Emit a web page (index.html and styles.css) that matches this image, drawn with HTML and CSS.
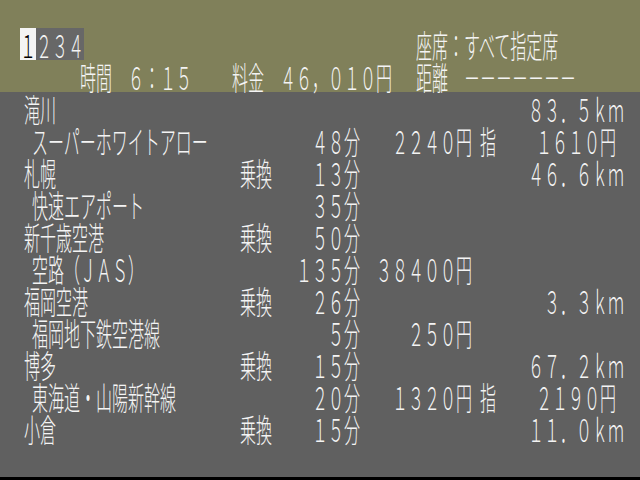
FILE: index.html
```html
<!DOCTYPE html>
<html>
<head>
    <title>経路検索</title>
    <link rel="stylesheet" href="styles.css">
</head>
<body>
    <div class="screen">
        <div class="header">
            <div class="head-row">
                <div class="tabs">
                    <span class="tab active">１</span><span class="tab">２</span><span class="tab">３</span><span class="tab">４</span>
                </div>
                <span class="seat-info">座席：すべて指定席</span>
            </div>
            <div class="head-row summary">
                <span class="sum-time">時間　６：１５</span>
                <span class="sum-fare">料金　４６，０１０円</span>
                <span class="sum-dist">距離　－－－－－－－</span>
            </div>
        </div>

        <div class="route">
            <div class="row station"><span class="name">滝川</span><span></span><span></span><span></span><span></span><span class="dist">８３．５ｋｍ</span></div>
            <div class="row line"><span class="name">スーパーホワイトアロー</span><span></span><span class="time">４８分</span><span class="fare">２２４０円</span><span class="mark">指</span><span class="extra">１６１０円</span></div>
            <div class="row station"><span class="name">札幌</span><span class="xfer">乗換</span><span class="time">１３分</span><span></span><span></span><span class="dist">４６．６ｋｍ</span></div>
            <div class="row line"><span class="name">快速エアポート</span><span></span><span class="time">３５分</span></div>
            <div class="row station"><span class="name">新千歳空港</span><span class="xfer">乗換</span><span class="time">５０分</span></div>
            <div class="row line"><span class="name">空路（ＪＡＳ）</span><span></span><span class="time">１３５分</span><span class="fare">３８４００円</span></div>
            <div class="row station"><span class="name">福岡空港</span><span class="xfer">乗換</span><span class="time">２６分</span><span></span><span></span><span class="dist">３．３ｋｍ</span></div>
            <div class="row line"><span class="name">福岡地下鉄空港線</span><span></span><span class="time">５分</span><span class="fare">２５０円</span></div>
            <div class="row station"><span class="name">博多</span><span class="xfer">乗換</span><span class="time">１５分</span><span></span><span></span><span class="dist">６７．２ｋｍ</span></div>
            <div class="row line"><span class="name">東海道・山陽新幹線</span><span></span><span class="time">２０分</span><span class="fare">１３２０円</span><span class="mark">指</span><span class="extra">２１９０円</span></div>
            <div class="row station"><span class="name">小倉</span><span class="xfer">乗換</span><span class="time">１５分</span><span></span><span></span><span class="dist">１１．０ｋｍ</span></div>
        </div>
    </div>
</body>
</html>
```

FILE: styles.css
```css
body {
    margin: 0;
    background-color: #000;
    font-family: "Noto Sans CJK JP", "Noto Sans", sans-serif;
    font-size: 16px;
    font-weight: 300;
    color: #f4f4f4;
}

.screen {
    width: 640px;
    height: 477px;
    background-color: #606060;
    overflow: hidden;
}

/* glyphs are drawn 16x16 and stretched to 16x32 cells */
.head-row span,
.row span {
    display: block;
    line-height: 16px;
    white-space: nowrap;
    transform: scaleY(2);
}

.header {
    height: 92px;
    padding: 28px 0 0 20px;
    box-sizing: border-box;
    background-color: #80805a;
}

.head-row {
    display: flex;
    align-items: center;
    height: 32px;
}

.tabs {
    display: flex;
    height: 32px;
    align-items: center;
    background-color: #676767;
}

.tab {
    width: 16px;
    text-align: center;
}

.tab.active {
    background-color: #f4f4f4;
    color: #000;
}

.seat-info {
    margin-left: 332px;
}

.summary .sum-time {
    margin-left: 60px;
}

.summary .sum-fare {
    margin-left: 40px;
}

.summary .sum-dist {
    margin-left: 24px;
}

.route {
    padding-left: 24px;
}

.row {
    display: grid;
    grid-template-columns: 216px 56px 64px 112px 24px 128px;
    align-items: center;
    height: 32px;
}

.line .name {
    padding-left: 8px;
}

.time,
.fare,
.mark,
.dist {
    text-align: right;
}

.extra {
    text-align: right;
    padding-right: 8px;
}
```
